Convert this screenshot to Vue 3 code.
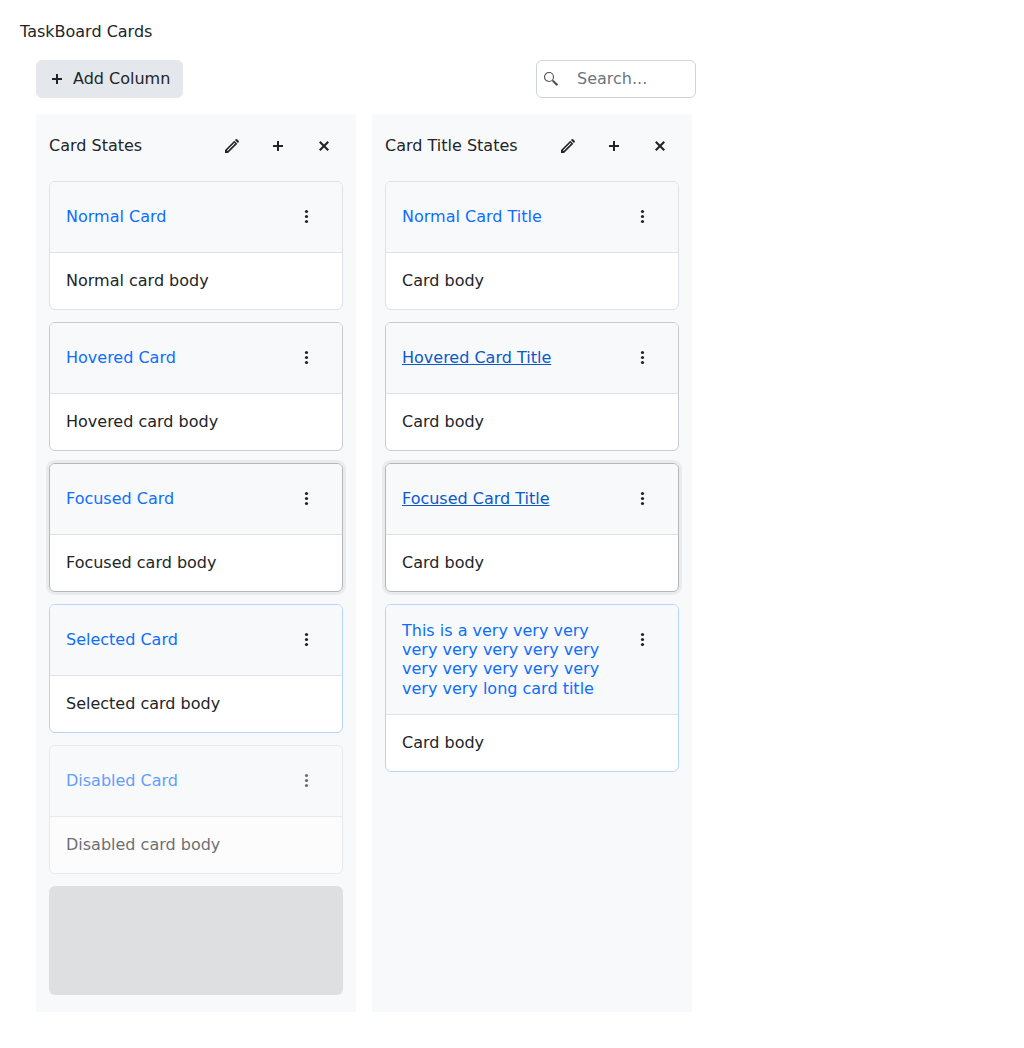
<script setup>
const columns = [
  {
    title: 'Card States',
    placeholder: true,
    cards: [
      { title: 'Normal Card', body: 'Normal card body' },
      { title: 'Hovered Card', body: 'Hovered card body', state: 'hover' },
      { title: 'Focused Card', body: 'Focused card body', state: 'focus' },
      { title: 'Selected Card', body: 'Selected card body', state: 'selected' },
      { title: 'Disabled Card', body: 'Disabled card body', state: 'disabled' }
    ]
  },
  {
    title: 'Card Title States',
    cards: [
      { title: 'Normal Card Title', body: 'Card body' },
      { title: 'Hovered Card Title', body: 'Card body', state: 'hover', link: true },
      { title: 'Focused Card Title', body: 'Card body', state: 'focus', link: true },
      {
        title: 'This is a very very very very very very very very very very very very very very very long card title',
        body: 'Card body',
        state: 'selected',
        long: true
      }
    ]
  }
]
const icons = {
  pencil: 'M1 12 10.300 2.700l3 3L4 15H1zM3 12.300l.7.7 7.500-7.500-.7-.7zM10.900 2.100l.9-.8q.7-.6 1.300 0l1.600 1.600q.6.600 0 1.300l-.8.9z',
  plus: 'M9 7h4v2H9v4H7V9H3V7h4V3h2z',
  close: 'M13 4.500 9.500 8l3.500 3.500-1.500 1.500L8 9.500 4.500 13 3 11.500 6.500 8 3 4.500 4.500 3 8 6.500 11.500 3z'
}
</script>

<template>
  <main class="page">
    <div class="heading">TaskBoard Cards</div>
    <section class="board">
      <header class="toolbar">
        <button class="add">
          <svg class="icon" viewBox="0 0 16 16"><path :d="icons.plus" /></svg>
          <span>Add Column</span>
        </button>
        <label class="search">
          <svg class="icon" viewBox="0 0 16 16">
            <circle cx="6" cy="6" r="4.500" fill="none" stroke="currentColor" stroke-width="1.100" />
            <path d="M8.900 9.700l.8-.8 1.400.6 4.100 4.100-1.500 1.500-4.100-4.100z" />
          </svg>
          <input type="text" placeholder="Search..." />
        </label>
      </header>
      <div class="columns">
        <section v-for="col in columns" :key="col.title" class="column">
          <header class="column-head">
            <span class="column-title">{{ col.title }}</span>
            <button v-for="(d, name) in icons" :key="name" class="tool">
              <svg class="icon" viewBox="0 0 16 16"><path fill-rule="evenodd" :d="d" /></svg>
            </button>
          </header>
          <div class="cards">
            <article v-for="card in col.cards" :key="card.title" class="card" :class="card.state">
              <header class="card-head">
                <a class="card-title" :class="{ active: card.link, long: card.long }">{{ card.title }}</a>
                <button class="tool">
                  <svg class="icon" viewBox="0 0 16 16">
                    <circle v-for="y in [2.5, 7.5, 12.5]" :key="y" cx="7.500" :cy="y" r="1.600" />
                  </svg>
                </button>
              </header>
              <div class="card-body">{{ card.body }}</div>
            </article>
            <div v-if="col.placeholder" class="placeholder"></div>
          </div>
        </section>
      </div>
    </section>
  </main>
</template>

<style>
body { background: #fff; }
</style>

<style scoped>
* { box-sizing: border-box; }
.page {
  padding: 20px;
  font: 16px/24px "DejaVu Sans", sans-serif;
  color: #212529;
}
.heading { height: 24px; }
.board { width: 692px; padding: 16px; }
button { font: inherit; color: inherit; }
.icon { display: block; width: 16px; height: 16px; fill: currentColor; flex: none; }
.toolbar { display: flex; justify-content: space-between; width: 660px; height: 38px; }
.add {
  display: flex; align-items: center; gap: 8px; height: 38px; padding: 0 12px;
  border: 1px solid #e4e7eb; border-radius: 6px; background: #e4e7eb;
}
.search {
  display: flex; align-items: center; width: 160px; height: 38px; padding-left: 6px;
  border: 1px solid #ced4da; border-radius: 6px;
}
.search .icon { color: #495057; }
.search input {
  width: 120px; margin-left: 18px; padding: 0; border: 0; outline: 0; background: none;
  font: inherit;
}
.search input::placeholder { color: #6c757d; opacity: 1; }
.columns { display: flex; gap: 16px; margin-top: 16px; }
.column { width: 320px; height: 898px; padding: 13px; border-radius: 3px; background: #f8f9fa; }
.column-head { display: flex; align-items: center; gap: 8px; height: 38px; }
.column-title { flex: 1; }
.tool {
  display: flex; align-items: center; justify-content: center; width: 38px; height: 38px;
  padding: 0; border: 0; background: none; flex: none;
}
.cards { display: flex; flex-direction: column; gap: 12px; margin-top: 16px; }
.card { border: 1px solid #dee2e6; border-radius: 6px; background: #fff; }
.card-head {
  display: flex; align-items: flex-start; justify-content: space-between; min-height: 71px;
  padding: 16px; border-bottom: 1px solid #dee2e6; border-radius: 5px 5px 0 0; background: #f8f9fa;
}
.card-title { width: 206px; padding-top: 9px; color: #0d6efd; line-height: 19.200px; }
.card-title.active { color: #0a58ca; text-decoration: underline; }
.card-title.long { padding-top: 0; }
.card-body { height: 56px; padding: 16px; }
.hover { border-color: #c8cbcf; }
.focus { border-color: #b4b7ba; box-shadow: 0 0 0 3px #e9ebed; }
.selected { border-color: #b6d4fe; }
.disabled { opacity: .65; }
.placeholder { height: 109px; border-radius: 6px; background: #dedfe1; }
</style>
